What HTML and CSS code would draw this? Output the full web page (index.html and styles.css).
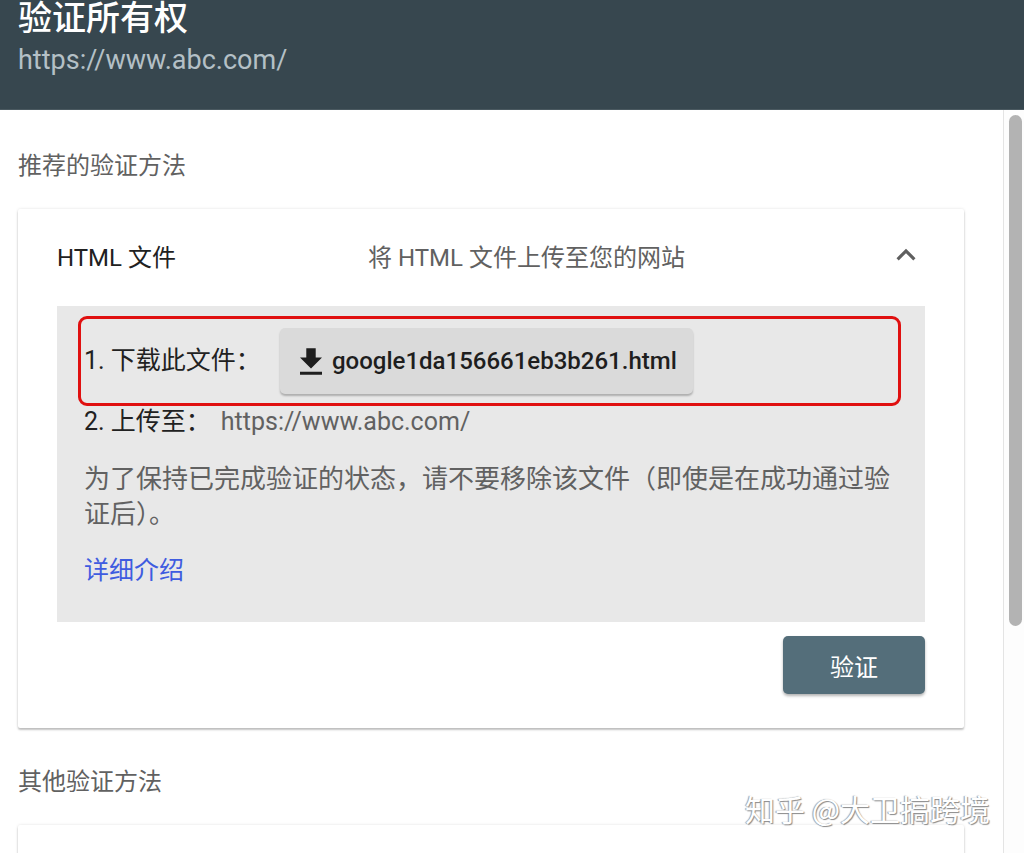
FILE: index.html
```html
<!DOCTYPE html>
<html lang="zh-CN">

<head>
    <meta charset="UTF-8">
    <meta name="viewport" content="width=device-width, initial-scale=1.0">
    <title>验证所有权</title>
    <link rel="stylesheet" href="styles.css">
</head>

<body>
    <header class="top-bar">
        <h1>验证所有权</h1>
        <p class="site-url">https://www.abc.com/</p>
    </header>

    <div class="page">
        <main class="content">
            <h2 class="section-title">推荐的验证方法</h2>

            <section class="method-card">
                <div class="method-head">
                    <span class="method-name">HTML 文件</span>
                    <span class="method-desc">将 HTML 文件上传至您的网站</span>
                    <svg class="chevron" viewBox="0 0 24 24" width="38" height="38">
                        <path d="M12 8l-6 6 1.41 1.41L12 10.83l4.59 4.58L18 14z" fill="#5f5f5f" />
                    </svg>
                </div>

                <div class="method-body">
                    <div class="step step-download">
                        <span class="step-label">1. 下载此文件：</span>
                        <button class="file-button">
                            <svg viewBox="5 3 14 17" width="22" height="27">
                                <path d="M19 9h-4V3H9v6H5l7 7 7-7zM5 18v2h14v-2H5z" fill="#1e1e1e" />
                            </svg>
                            google1da156661eb3b261.html
                        </button>
                    </div>
                    <div class="step">2. 上传至：<span class="step-url">https://www.abc.com/</span></div>
                    <p class="note">为了保持已完成验证的状态，请不要移除该文件（即使是在成功通过验证后）。</p>
                    <a class="more-link" href="#">详细介绍</a>
                </div>

                <div class="method-actions">
                    <button class="verify-button">验证</button>
                </div>
            </section>

            <h2 class="section-title">其他验证方法</h2>
            <section class="method-card method-card-empty"></section>
        </main>

        <div class="scrollbar">
            <div class="scroll-thumb"></div>
        </div>
    </div>

    <div class="watermark">知乎 @大卫搞跨境</div>
</body>

</html>
```

FILE: styles.css
```css
body {
    font-family: 'Roboto', 'Noto Sans CJK SC', sans-serif;
    margin: 0;
    padding: 0;
    height: 853px;
    overflow: hidden;
    background: #fff;
    color: #212121;
    position: relative;
}

.top-bar {
    height: 110px;
    box-sizing: border-box;
    padding: 0 18px;
    background-color: #37474f;
    border-bottom: 1px solid #4a5960;
}

.top-bar h1 {
    margin: 0;
    font-size: 34px;
    font-weight: 500;
    line-height: 36px;
    color: #fff;
}

.site-url {
    margin: 9px 0 0;
    font-size: 27px;
    line-height: 30px;
    color: #b4c0c6;
}

.page {
    display: flex;
    height: 743px;
    overflow: hidden;
}

.content {
    flex: 1;
    padding: 40px 39px 0 18px;
}

.section-title {
    margin: 0;
    font-size: 24px;
    font-weight: 400;
    line-height: 32px;
    color: #616161;
}

.method-card {
    margin: 27px 0 38px;
    padding: 0 39px;
    background: #fff;
    border-radius: 2px;
    box-shadow: 0 2px 2px rgba(0, 0, 0, 0.22), 0 0 3px rgba(0, 0, 0, 0.12);
}

.method-card-empty {
    height: 40px;
    margin-bottom: 0;
}

.method-head {
    display: flex;
    align-items: center;
    height: 97px;
    box-sizing: border-box;
    padding-bottom: 5px;
    font-size: 24px;
}

.method-name {
    width: 311px;
    color: #212121;
}

.method-desc {
    flex: 1;
    color: #616161;
}

.method-body {
    background-color: #e8e8e8;
    padding: 10px 24px 33px 27px;
    font-size: 25px;
}

.step {
    line-height: 32px;
    color: #212121;
}

.step-download {
    display: flex;
    align-items: center;
    margin-left: -6px;
    padding: 9px 3px 9px;
    border: 3px solid #e01010;
    border-radius: 9px;
}

.step-label {
    width: 196px;
}

.file-button {
    display: flex;
    align-items: center;
    gap: 10px;
    height: 66px;
    padding: 0 16px 0 20px;
    border: none;
    border-radius: 5px;
    background-color: #dadada;
    box-shadow: 0 2px 2px rgba(0, 0, 0, 0.25);
    font-family: 'Roboto', sans-serif;
    font-size: 24px;
    font-weight: 500;
    color: #1e1e1e;
}

.step-url {
    margin-left: 10px;
    color: #616161;
}

.note {
    margin: 24px 0 0;
    font-size: 26px;
    line-height: 35px;
    color: #616161;
}

.more-link {
    display: block;
    margin-top: 21px;
    font-size: 25px;
    line-height: 36px;
    color: #3f5ce0;
    text-decoration: none;
}

.method-actions {
    display: flex;
    justify-content: flex-end;
    padding: 14px 0 34px;
}

.verify-button {
    width: 142px;
    height: 58px;
    border: none;
    border-radius: 5px;
    background-color: #546e7a;
    box-shadow: 0 2px 3px rgba(0, 0, 0, 0.3);
    font-family: 'Noto Sans CJK SC', sans-serif;
    font-size: 24px;
    color: #fff;
}

.scrollbar {
    width: 20px;
    border-left: 1px solid #e4e4e4;
    background: #fdfdfd;
}

.scroll-thumb {
    width: 13px;
    height: 511px;
    margin: 5px 0 0 5px;
    border-radius: 7px;
    background-color: #b3b3b3;
}

.watermark {
    position: absolute;
    left: 745px;
    top: 788px;
    font-family: 'Noto Sans CJK SC', sans-serif;
    font-size: 30px;
    line-height: 40px;
    color: #fff;
    text-shadow: 1px 1px 1px #8a8a8a, -1px 0 1px #9a9a9a;
}
```
